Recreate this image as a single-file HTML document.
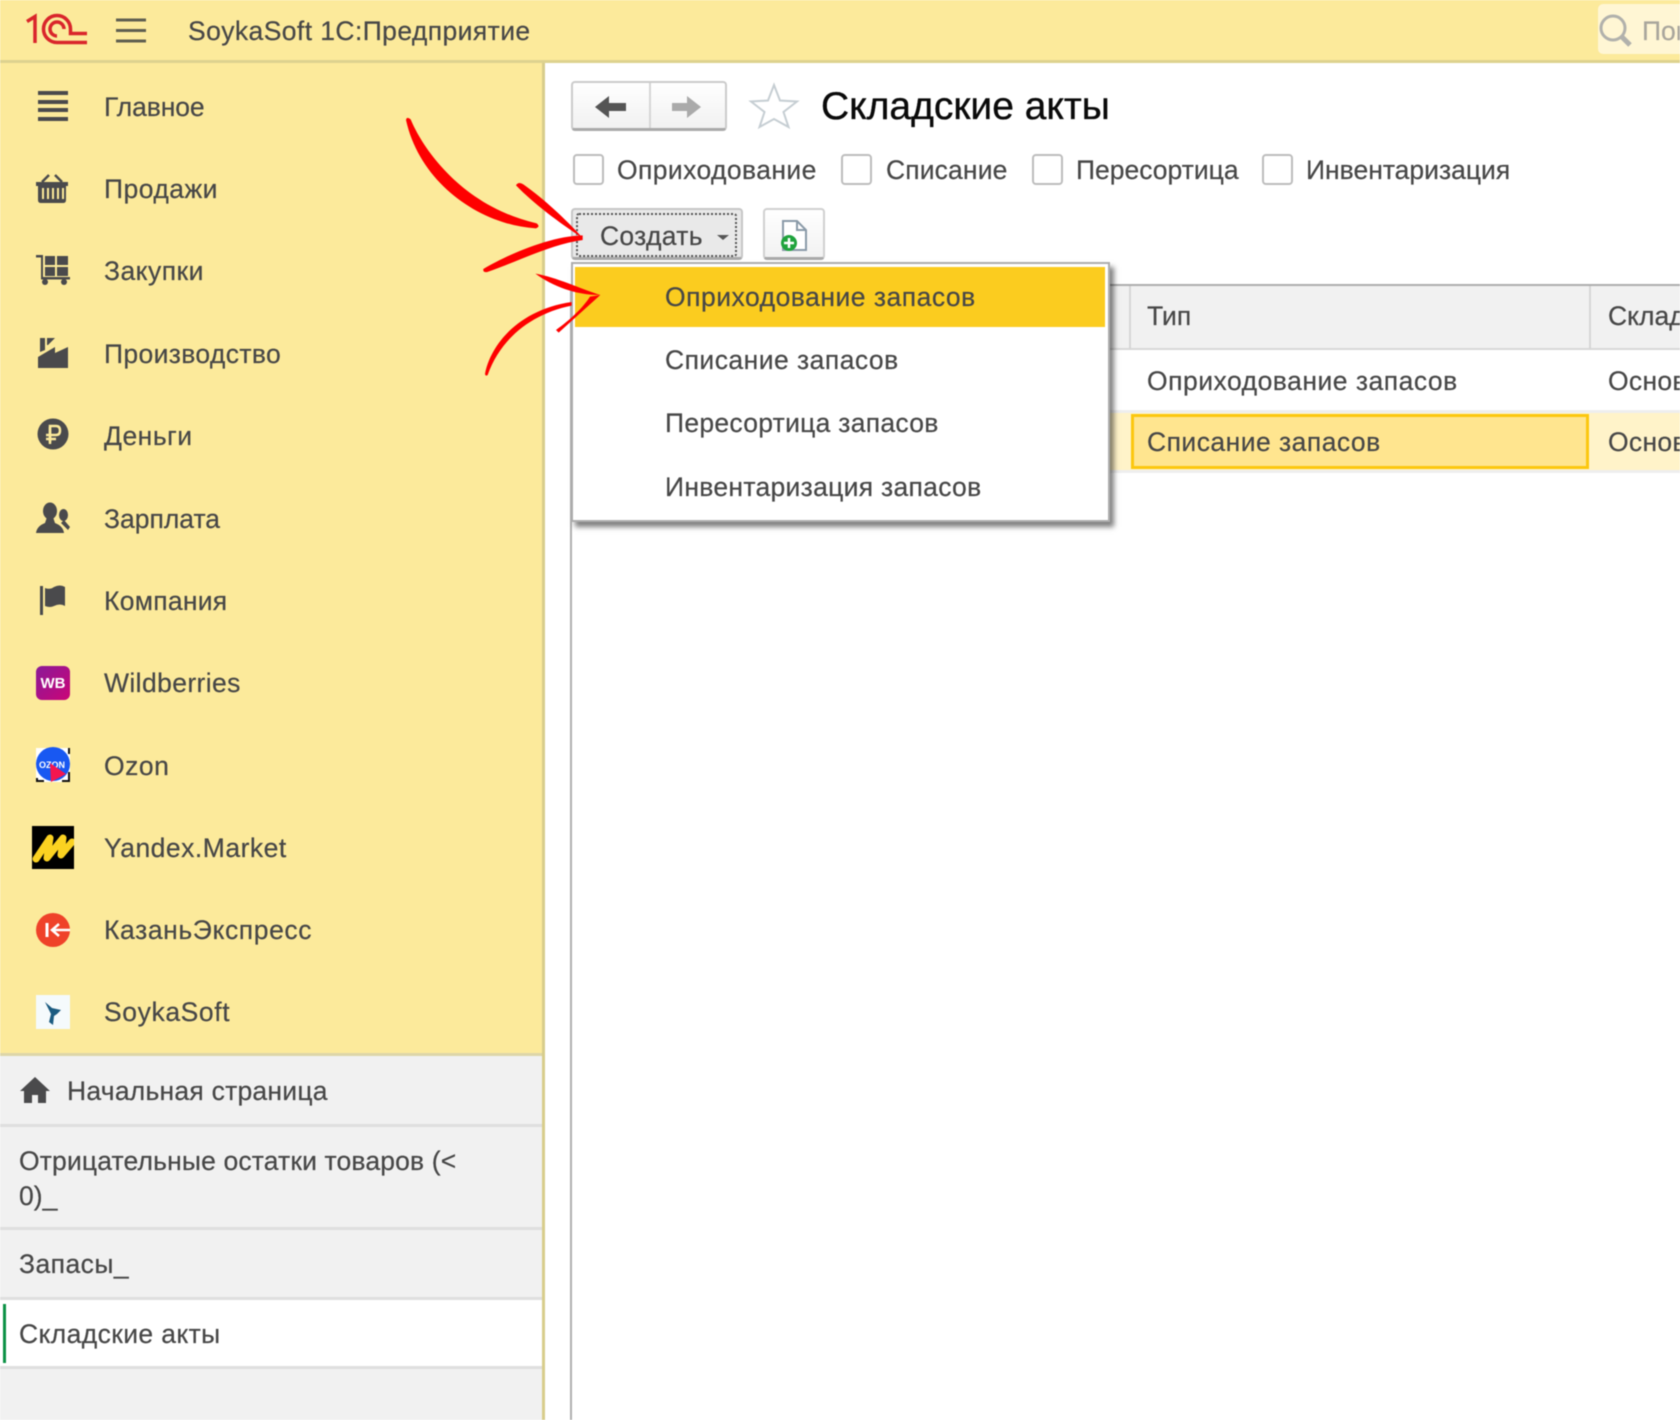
<!DOCTYPE html>
<html lang="ru">
<head>
<meta charset="utf-8">
<title>SoykaSoft 1С:Предприятие</title>
<style>
html,body{margin:0;padding:0;background:#fff}
#page{position:relative;width:1680px;height:1420px;overflow:hidden;background:#fff;font-family:"Liberation Sans","Noto Sans CJK SC",sans-serif;color:#474747;filter:blur(.55px)}
.b{position:absolute}
.t{position:absolute;white-space:nowrap;line-height:30px;font-size:26.5px;-webkit-text-stroke:.2px currentColor}
.cb{position:absolute;top:154px;width:27px;height:27px;border:2px solid #bdbdbd;border-radius:4px;background:#fff}
svg{position:absolute;overflow:visible}
</style>
</head>
<body>
<div id="page">
  <!-- top bar -->
  <div class="b" style="left:0;top:0;width:1680px;height:60px;background:#fcea9b"></div>
  <div class="b" style="left:0;top:60px;width:1680px;height:3px;background:#ddd28f"></div>
  <svg style="left:0;top:0" width="160" height="60" fill="none">
    <g stroke="#d9252b" stroke-width="3.5">
      <path d="M27 21.500L35 16.500V43"/>
      <path d="M87 42.500H57A13.500 13.500 0 1 1 70.500 29V33.500H87"/>
      <path d="M57 36A7 7 0 1 1 64 29"/>
    </g>
    <g stroke="#5f5f50" stroke-width="3">
      <path d="M116 20H146M116 30.500H146M116 41H146"/>
    </g>
  </svg>
  <div class="t" style="left:188px;top:16px;letter-spacing:.41px">SoykaSoft 1С:Предприятие</div>
  <div class="b" style="left:1598px;top:4px;width:90px;height:50px;background:#fff6d4;border-radius:5px"></div>
  <svg style="left:1598px;top:0" width="60" height="60" fill="none" stroke="#b1b1ac">
    <circle cx="15" cy="28" r="12" stroke-width="3"/>
    <path d="M24 37L32 45" stroke-width="5"/>
  </svg>
  <div class="t" style="left:1642px;top:16px;color:#a9a69c">Пои</div>

  <!-- sidebar -->
  <div class="b" style="left:0;top:63px;width:542px;height:992px;background:#fcea9b"></div>
  <div class="b" style="left:0;top:1055px;width:542px;height:365px;background:#f1f1f1"></div>
  <div class="b" style="left:542px;top:63px;width:3px;height:1357px;background:#d8cd8c"></div>
  <div class="b" style="left:0;top:1053px;width:542px;height:3px;background:#ddd6a8"></div>

  <div class="t" style="left:104px;top:92px;letter-spacing:-.1px">Главное</div>
  <div class="t" style="left:104px;top:174px;letter-spacing:.46px">Продажи</div>
  <div class="t" style="left:104px;top:256px;letter-spacing:.46px">Закупки</div>
  <div class="t" style="left:104px;top:339px;letter-spacing:.36px">Производство</div>
  <div class="t" style="left:104px;top:421px;letter-spacing:.5px">Деньги</div>
  <div class="t" style="left:104px;top:504px">Зарплата</div>
  <div class="t" style="left:104px;top:586px;letter-spacing:.27px">Компания</div>
  <div class="t" style="left:104px;top:668px;letter-spacing:.39px">Wildberries</div>
  <div class="t" style="left:104px;top:751px;letter-spacing:.5px">Ozon</div>
  <div class="t" style="left:104px;top:833px;letter-spacing:.5px">Yandex.Market</div>
  <div class="t" style="left:104px;top:915px;letter-spacing:.6px">КазаньЭкспресс</div>
  <div class="t" style="left:104px;top:997px;letter-spacing:.6px">SoykaSoft</div>

  <!-- sidebar icons -->
  <svg style="left:0;top:0" width="100" height="1100">
    <defs>
      <linearGradient id="wb" x1="0" y1="0" x2="1" y2="1"><stop offset="0" stop-color="#8a1a98"/><stop offset="1" stop-color="#cb0577"/></linearGradient>
      <clipPath id="yc"><rect x="32" y="826" width="42" height="43"/></clipPath>
    </defs>
    <g fill="#4a4a4c">
      <rect x="38" y="91" width="30" height="4"/><rect x="38" y="100" width="30" height="4"/><rect x="38" y="108" width="30" height="4"/><rect x="38" y="117" width="30" height="4"/>
      <!-- basket -->
      <path d="M36 182H68V186H66V200Q66 203 63 203H41Q38 203 38 200V186H36Z"/>
      <path d="M42 182L49 175M62 182L55 175" stroke="#4a4a4c" stroke-width="2.500" fill="none"/>
      <path d="M42 188h2v11h-2zM47 188h2v11h-2zM52 188h2v11h-2zM57 188h2v11h-2zM62 188h2v11h-2z" fill="#fcea9b"/>
      <!-- cart -->
      <rect x="45" y="256" width="10" height="9"/><rect x="57" y="256" width="11" height="9"/><rect x="45" y="267" width="10" height="9"/><rect x="57" y="267" width="11" height="9"/>
      <path d="M36 255H43V277H70V279.500H41V257.500H36Z"/>
      <circle cx="45" cy="282" r="3"/><circle cx="64" cy="282" r="3"/>
      <!-- factory -->
      <path d="M38 368V357L55 347V353L68 347V368Z"/>
      <path d="M40 338H45V350L40 352ZM47 338H55L48 345H47Z"/>
      <!-- money -->
      <circle cx="53" cy="434" r="15.500"/>
      <!-- people -->
      <ellipse cx="50" cy="511" rx="7" ry="8.500"/>
      <path d="M36 533Q37 526 45 523L47 517H53L55 523Q63 526 64 533Z"/>
      <ellipse cx="63.500" cy="515" rx="4.500" ry="6"/>
      <path d="M64 520L70 527L68 530L61 523Z"/>
      <!-- flag -->
      <rect x="40" y="586" width="3" height="29"/>
      <path d="M45 588Q50 590 54 587Q60 584 65 587V606Q60 603 54 606Q50 608 45 606Z"/>
    </g>
    <path d="M50 442V426H56Q60 426 60 430.500Q60 435 56 435H46M46 439H56" stroke="#fcea9b" stroke-width="2.500" fill="none"/>
    <path d="M50 444V427" stroke="#fcea9b" stroke-width="2.500"/>
    <rect x="36" y="666" width="34" height="34" rx="6" fill="url(#wb)"/>
    <text x="53" y="688" font-family="Liberation Sans" font-size="15" font-weight="bold" fill="#fff" text-anchor="middle">WB</text>
    <!-- ozon -->
    <rect x="36" y="748" width="34" height="34" fill="#fff"/>
    <path d="M36 782H44V780H38V778H36ZM62 782H70V772H68V780H62ZM68 748H70V754H68Z" fill="#111"/>
    <circle cx="53" cy="764" r="17" fill="#1858f2"/>
    <text x="52" y="768" font-family="Liberation Sans" font-size="9" font-weight="bold" fill="#fff" text-anchor="middle">OZON</text>
    <path d="M50 763L66 774L51 782Z" fill="#f5164f"/>
    <!-- yandex -->
    <rect x="32" y="826" width="42" height="43" fill="#000"/>
    <path d="M36 859L50 838L47 858L63 838L61 855L72 842" stroke="#fbd221" stroke-width="7" stroke-linejoin="round" stroke-linecap="round" fill="none" clip-path="url(#yc)"/>
    <!-- kazan -->
    <circle cx="53" cy="930" r="17" fill="#ef4229"/>
    <path d="M47 923V937" stroke="#fff" stroke-width="3"/>
    <path d="M70 930H53M59 924L52 930L59 936" stroke="#fff" stroke-width="2.500" fill="none"/>
    <!-- soyka -->
    <rect x="36" y="995" width="34" height="34" fill="#f5fafc"/>
    <path d="M45 1002L52 1008L61 1010L57 1014L54 1016L53 1025L49 1022L51 1014Z" fill="#1b5b80"/>
  </svg>

  <!-- open tabs -->
  <svg style="left:19px;top:1076px" width="32" height="30"><path d="M16 1L31 15H27V27H19V19H13V27H5V15H1Z" fill="#4a4a4c"/></svg>
  <div class="t" style="left:67px;top:1076px;letter-spacing:.24px">Начальная страница</div>
  <div class="b" style="left:0;top:1124px;width:542px;height:3px;background:#dfdfdf"></div>
  <div class="t" style="left:19px;top:1146px;letter-spacing:.15px">Отрицательные остатки товаров (&lt;</div>
  <div class="t" style="left:19px;top:1181px">0)_</div>
  <div class="b" style="left:0;top:1227px;width:542px;height:3px;background:#dfdfdf"></div>
  <div class="t" style="left:19px;top:1249px;letter-spacing:.45px">Запасы_</div>
  <div class="b" style="left:0;top:1297px;width:542px;height:3px;background:#dfdfdf"></div>
  <div class="b" style="left:0;top:1300px;width:542px;height:66px;background:#fff"></div>
  <div class="b" style="left:3px;top:1304px;width:3px;height:59px;background:#0c9145"></div>
  <div class="t" style="left:19px;top:1319px;letter-spacing:.38px">Складские акты</div>
  <div class="b" style="left:0;top:1366px;width:542px;height:3px;background:#dfdfdf"></div>

  <!-- nav buttons -->
  <div class="b" style="left:571px;top:81px;width:152px;height:45px;border:2px solid #cbcbcb;border-bottom:3px solid #a9a9a9;border-radius:4px;background:linear-gradient(#fff,#f1f1f1)"></div>
  <div class="b" style="left:649px;top:83px;width:2px;height:45px;background:#d6d6d6"></div>
  <svg style="left:590px;top:91px" width="120" height="32">
    <path d="M5 16L19 5V12H36V20H19V27Z" fill="#555"/>
    <path d="M111 16L97 5V12H82V20H97V27Z" fill="#aaa"/>
  </svg>
  <svg style="left:750px;top:82px" width="50" height="48">
    <path d="M24 3L30 18.500L47 19.500L33.500 30L38.500 45L24 37L9.500 45L14.500 30L1 19.500L18 18.500Z" fill="#fff" stroke="#c6ced3" stroke-width="2"/>
  </svg>
  <div class="t" style="left:821px;top:85px;font-size:39px;line-height:44px;color:#0a0a0a;-webkit-text-stroke:.35px #0a0a0a">Складские акты</div>

  <!-- checkboxes -->
  <div class="cb" style="left:573px"></div>
  <div class="t" style="left:617px;top:155px;letter-spacing:.4px">Оприходование</div>
  <div class="cb" style="left:841px"></div>
  <div class="t" style="left:886px;top:155px;letter-spacing:.13px">Списание</div>
  <div class="cb" style="left:1032px"></div>
  <div class="t" style="left:1076px;top:155px">Пересортица</div>
  <div class="cb" style="left:1262px"></div>
  <div class="t" style="left:1306px;top:155px">Инвентаризация</div>

  <!-- create button -->
  <div class="b" style="left:571px;top:208px;width:168px;height:47px;border:2px solid #c6c6c6;border-bottom:3px solid #a9a9a9;border-radius:4px;background:#e9e9e9"></div>
  <div class="b" style="left:576px;top:213px;width:157px;height:40px;border:2px dotted #555;border-radius:3px"></div>
  <div class="t" style="left:600px;top:221px;letter-spacing:.3px">Создать</div>
  <div class="b" style="left:717px;top:235px;width:0;height:0;border-left:6px solid transparent;border-right:6px solid transparent;border-top:5px solid #555"></div>
  <div class="b" style="left:763px;top:208px;width:58px;height:47px;border:2px solid #d0d0d0;border-bottom:3px solid #a9a9a9;border-radius:4px;background:linear-gradient(#fff,#f2f2f2)"></div>
  <svg style="left:777px;top:218px" width="34" height="36" fill="none">
    <path d="M6 3H20L29 12V32H6Z" fill="#fff" stroke="#8a9aa8" stroke-width="2"/>
    <path d="M20 3V12H29" stroke="#8a9aa8" stroke-width="2"/>
    <circle cx="12" cy="25" r="8" fill="#1fa33c"/>
    <path d="M12 20V30M7 25H17" stroke="#fff" stroke-width="2.500"/>
  </svg>

  <!-- table -->
  <div class="b" style="left:570px;top:284px;width:2px;height:1136px;background:#b0b0b0"></div>
  <div class="b" style="left:570px;top:284px;width:1110px;height:2px;background:#adadad"></div>
  <div class="b" style="left:572px;top:286px;width:1108px;height:62px;background:#f1f1f1"></div>
  <div class="b" style="left:572px;top:348px;width:1108px;height:2px;background:#d8d8d8"></div>
  <div class="b" style="left:1129px;top:286px;width:2px;height:64px;background:#d6d6d6"></div>
  <div class="b" style="left:1589px;top:286px;width:2px;height:64px;background:#d6d6d6"></div>
  <div class="t" style="left:1147px;top:301px">Тип</div>
  <div class="t" style="left:1608px;top:301px">Склад</div>
  <div class="t" style="left:1147px;top:366px;letter-spacing:.5px">Оприходование запасов</div>
  <div class="t" style="left:1608px;top:366px;letter-spacing:.3px">Основ</div>
  <div class="b" style="left:572px;top:410px;width:1108px;height:3px;background:#eeeeee"></div>
  <div class="b" style="left:572px;top:413px;width:1108px;height:57px;background:#fff3c9"></div>
  <div class="b" style="left:1131px;top:414px;width:452px;height:49px;background:#ffe58f;border:3px solid #fcc70e"></div>
  <div class="t" style="left:1147px;top:427px;letter-spacing:.47px">Списание запасов</div>
  <div class="t" style="left:1608px;top:427px;letter-spacing:.3px">Основ</div>
  <div class="b" style="left:572px;top:470px;width:1108px;height:3px;background:#eeeeee"></div>

  <!-- dropdown -->
  <div class="b" style="left:571px;top:262px;width:535px;height:256px;background:#fff;border:2px solid #adadad;box-shadow:4px 5px 5px rgba(0,0,0,.5)"></div>
  <div class="b" style="left:575px;top:267px;width:530px;height:60px;background:#fbcc1f"></div>
  <div class="t" style="left:665px;top:282px;letter-spacing:.5px">Оприходование запасов</div>
  <div class="t" style="left:665px;top:345px;letter-spacing:.47px">Списание запасов</div>
  <div class="t" style="left:665px;top:408px;letter-spacing:.28px">Пересортица запасов</div>
  <div class="t" style="left:665px;top:472px;letter-spacing:.3px">Инвентаризация запасов</div>

  <!-- red arrows -->
  <svg style="left:390px;top:100px" width="230" height="290" viewBox="0 0 690 870" fill="#fe0000">
    <path d="M48 60Q50 48 62 58C100 150 220 320 440 370Q452 380 438 385C270 375 90 250 48 60Z"/>
    <path d="M378 256Q385 244 400 253C460 295 530 360 578 414C510 370 430 310 378 256Z"/>
    <path d="M578 406C480 408 350 465 280 507Q278 518 292 516C390 482 480 434 578 420Z"/>
    <path d="M285 822C300 740 380 630 545 606L545 617C420 642 330 720 293 825Q287 830 285 822Z"/>
    <path d="M436 521C500 532 570 566 631 585C560 586 490 560 436 521Z"/>
    <path d="M631 585L506 698L498 690C540 660 580 622 600 590Z"/>
  </svg>
</div>
</body>
</html>
